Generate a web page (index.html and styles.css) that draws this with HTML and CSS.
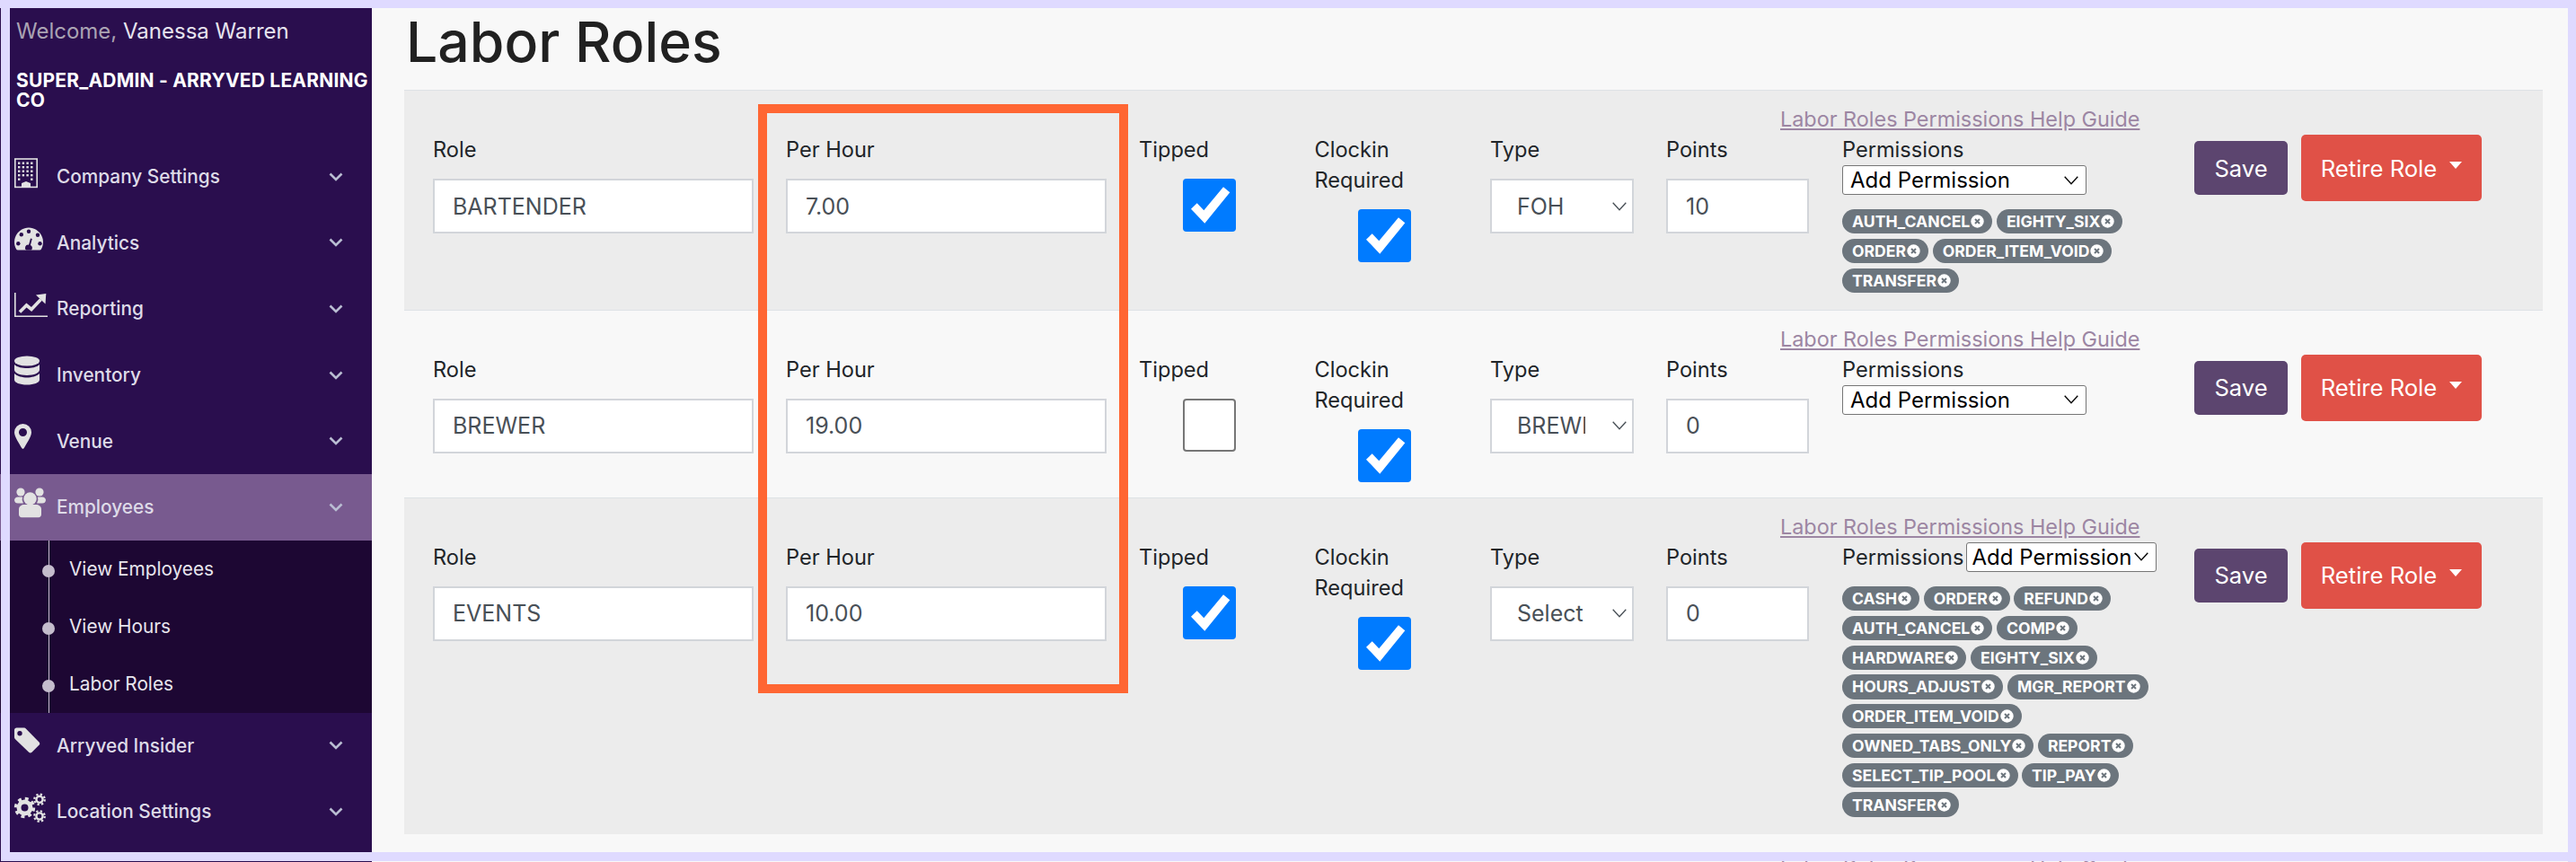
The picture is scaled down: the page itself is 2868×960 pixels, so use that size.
FILE: index.html
```html
<!DOCTYPE html>
<html lang="en">
<head>
<meta charset="utf-8">
<title>Labor Roles</title>
<link rel="stylesheet" href="styles.css">
</head>
<body>
<div class="page">
  <div class="edge"></div>
  <div class="frame">
    <div class="shell">
      <aside class="sidebar">
        <div class="welcome"><span class="welcome-muted">Welcome,</span> Vanessa Warren</div>
        <div class="company">SUPER_ADMIN - ARRYVED LEARNING CO</div>
        <nav class="nav">
          <a class="nav-item">
            <svg class="nav-icon" viewBox="0 0 40 40"><rect x="0.8" y="0" width="24.4" height="31.4" fill="none" stroke="#e2e2e2" stroke-width="1.6"/><g fill="#e2e2e2"><rect x="4" y="3.5" width="2.4" height="2.4"/><rect x="8.7" y="3.5" width="2.4" height="2.4"/><rect x="13.4" y="3.5" width="2.4" height="2.4"/><rect x="18.1" y="3.5" width="2.4" height="2.4"/><rect x="4" y="8" width="2.4" height="2.4"/><rect x="8.7" y="8" width="2.4" height="2.4"/><rect x="13.4" y="8" width="2.4" height="2.4"/><rect x="18.1" y="8" width="2.4" height="2.4"/><rect x="4" y="12.5" width="2.4" height="2.4"/><rect x="8.7" y="12.5" width="2.4" height="2.4"/><rect x="13.4" y="12.5" width="2.4" height="2.4"/><rect x="18.1" y="12.5" width="2.4" height="2.4"/><rect x="4" y="17" width="2.4" height="2.4"/><rect x="8.7" y="17" width="2.4" height="2.4"/><rect x="13.4" y="17" width="2.4" height="2.4"/><rect x="18.1" y="17" width="2.4" height="2.4"/><rect x="4" y="21.5" width="2.4" height="2.4"/><rect x="18.1" y="21.5" width="2.4" height="2.4"/><path d="M8 31v-4l5-2 5 2v4z"/></g></svg>
            <span class="nav-label">Company Settings</span>
            <svg class="chev" viewBox="0 0 16 10"><path d="M1.5 1.5 8 8l6.5-6.5" fill="none" stroke="#b9bdd2" stroke-width="2.6"/></svg>
          </a>
          <a class="nav-item">
            <svg class="nav-icon" viewBox="0 0 40 40"><path d="M16 3.6C7.2 3.6 0 10.8 0 19.6c0 3 .8 5.6 2.1 8a2 2 0 0 0 1.7 1h24.4a2 2 0 0 0 1.7-1c1.3-2.4 2.1-5 2.1-8C32 10.8 24.8 3.6 16 3.6z" fill="#e2e2e2"/><g fill="#2a0e4e"><circle cx="4.3" cy="21.3" r="2.2"/><circle cx="7.8" cy="11.3" r="2.2"/><circle cx="16" cy="7.8" r="2.2"/><circle cx="26" cy="11.8" r="2.2"/><circle cx="28.5" cy="21.3" r="2.2"/><path d="M18 15.500l1.800.5-1.900 7a3.300 3.300 0 0 1 .9 5.500h-5.600a3.300 3.300 0 0 1 2.800-5.800z"/></g></svg>
            <span class="nav-label">Analytics</span>
            <svg class="chev" viewBox="0 0 16 10"><path d="M1.5 1.5 8 8l6.5-6.5" fill="none" stroke="#b9bdd2" stroke-width="2.6"/></svg>
          </a>
          <a class="nav-item">
            <svg class="nav-icon" viewBox="0 0 40 40"><path d="M.8 2v26.200H37" fill="none" stroke="#e2e2e2" stroke-width="1.6"/><path d="M6 23.500l7.500-7.500 5.500 4.500 10.500-11" fill="none" stroke="#e2e2e2" stroke-width="3.6"/><path d="M24 4.500 35.300 3l-.8 11.500z" fill="#e2e2e2"/></svg>
            <span class="nav-label">Reporting</span>
            <svg class="chev" viewBox="0 0 16 10"><path d="M1.5 1.5 8 8l6.5-6.5" fill="none" stroke="#b9bdd2" stroke-width="2.6"/></svg>
          </a>
          <a class="nav-item">
            <svg class="nav-icon" viewBox="0 0 40 40"><g fill="#e2e2e2"><ellipse cx="14" cy="4" rx="14" ry="5.6"/><path d="M0 8c3 3 9 4 14 4s11-1 14-4v6c0 3-6 6-14 6S0 17 0 14z"/><path d="M0 18c3 3 9 4.500 14 4.500S25 21 28 18v7c0 3-6 5.500-14 5.500S0 28 0 25z"/></g></svg>
            <span class="nav-label">Inventory</span>
            <svg class="chev" viewBox="0 0 16 10"><path d="M1.5 1.5 8 8l6.5-6.5" fill="none" stroke="#b9bdd2" stroke-width="2.6"/></svg>
          </a>
          <a class="nav-item">
            <svg class="nav-icon" viewBox="0 0 40 40"><path fill-rule="evenodd" d="M9.500 1A9.500 9.500 0 0 1 19 10.500c0 5-5.900 13-8.200 17.600-.6 1.100-2 1.100-2.600 0C5.900 23.500 0 15.500 0 10.500A9.500 9.500 0 0 1 9.500 1zm0 5a4.500 4.500 0 1 0 0 9 4.500 4.500 0 0 0 0-9z" fill="#e2e2e2"/></svg>
            <span class="nav-label">Venue</span>
            <svg class="chev" viewBox="0 0 16 10"><path d="M1.5 1.5 8 8l6.5-6.5" fill="none" stroke="#b9bdd2" stroke-width="2.6"/></svg>
          </a>
          <a class="nav-item nav-item-active">
            <svg class="nav-icon" viewBox="0 0 40 40"><g fill="#e2e2e2"><circle cx="7" cy="3" r="4.6"/><circle cx="28" cy="3" r="4.6"/><path d="M0 12a4 4 0 0 1 4-3.500h5a8 8 0 0 0 1 7H4a4 4 0 0 1-4-3.500z"/><path d="M35 12a4 4 0 0 0-4-3.500h-5a8 8 0 0 1-1 7h6a4 4 0 0 0 4-3.500z"/><circle cx="17.5" cy="10.5" r="7.2"/><path d="M5 22c0-3 3-5 6-5h13c3 0 6 2 6 5v6c0 2-1.500 3.200-3 3.200H8c-1.500 0-3-1.200-3-3.200z"/></g></svg>
            <span class="nav-label">Employees</span>
            <svg class="chev" viewBox="0 0 16 10"><path d="M1.5 1.5 8 8l6.5-6.5" fill="none" stroke="#b9bdd2" stroke-width="2.6"/></svg>
          </a>
          <div class="subnav">
            <a class="sub-item">View Employees</a>
            <a class="sub-item">View Hours</a>
            <a class="sub-item">Labor Roles</a>
          </div>
          <a class="nav-item">
            <svg class="nav-icon" viewBox="0 0 40 40"><path fill-rule="evenodd" d="M2.500.6H11c.7 0 1.300.3 1.800.8l14.700 15c1 1 1 2.500 0 3.400l-8 8c-1 1-2.500 1-3.400 0L1 13.200c-.6-.6-1-1.300-1-2V3C0 1.700 1.200.6 2.500.6zM6 4a2.700 2.700 0 1 0 0 5.400A2.700 2.700 0 0 0 6 4z" fill="#e2e2e2"/></svg>
            <span class="nav-label">Arryved Insider</span>
            <svg class="chev" viewBox="0 0 16 10"><path d="M1.5 1.5 8 8l6.5-6.5" fill="none" stroke="#b9bdd2" stroke-width="2.6"/></svg>
          </a>
          <a class="nav-item">
            <svg class="nav-icon" viewBox="0 0 40 40"><g fill="none" stroke="#e2e2e2"><circle cx="11.5" cy="15.5" r="6.5" stroke-width="5"/><circle cx="11.5" cy="15.5" r="10" stroke-width="3.4" stroke-dasharray="3.9 3.95"/><circle cx="28" cy="6.3" r="3.6" stroke-width="2.4"/><circle cx="28" cy="6.3" r="5.8" stroke-width="2.2" stroke-dasharray="2.28 2.28"/><circle cx="28" cy="25" r="3.6" stroke-width="2.4"/><circle cx="28" cy="25" r="5.8" stroke-width="2.2" stroke-dasharray="2.28 2.28"/></g></svg>
            <span class="nav-label">Location Settings</span>
            <svg class="chev" viewBox="0 0 16 10"><path d="M1.5 1.5 8 8l6.5-6.5" fill="none" stroke="#b9bdd2" stroke-width="2.6"/></svg>
          </a>
        </nav>
      </aside>
      <main class="main">
        <h1 class="title">Labor Roles</h1>

        <section class="role role-shaded">
          <div class="help"><a class="help-link">Labor Roles Permissions Help Guide</a></div>
          <div class="role-grid">
            <div class="field"><label class="label">Role</label><input class="control control-wide" value="BARTENDER"></div>
            <div class="field"><label class="label">Per Hour</label><input class="control control-wide" value="7.00"></div>
            <div class="field"><label class="label">Tipped</label><input class="check" type="checkbox" checked></div>
            <div class="field"><label class="label label-clockin">Clockin Required</label><input class="check" type="checkbox" checked></div>
            <div class="field"><label class="label">Type</label><select class="control control-select"><option>FOH</option></select></div>
            <div class="field"><label class="label">Points</label><input class="control control-small" value="10"></div>
            <div class="perm">
              <div class="perm-head"><label class="label-bare">Permissions</label><select class="perm-select"><option>Add Permission</option></select></div>
              <div class="chips">
                <span class="chip">AUTH_CANCEL<i class="chip-x"></i></span><span class="chip">EIGHTY_SIX<i class="chip-x"></i></span><span class="chip">ORDER<i class="chip-x"></i></span><span class="chip">ORDER_ITEM_VOID<i class="chip-x"></i></span><span class="chip">TRANSFER<i class="chip-x"></i></span>
              </div>
            </div>
            <div class="actions"><button class="btn btn-save">Save</button><button class="btn btn-retire">Retire Role<i class="caret"></i></button></div>
          </div>
        </section>

        <section class="role">
          <div class="help"><a class="help-link">Labor Roles Permissions Help Guide</a></div>
          <div class="role-grid">
            <div class="field"><label class="label">Role</label><input class="control control-wide" value="BREWER"></div>
            <div class="field"><label class="label">Per Hour</label><input class="control control-wide" value="19.00"></div>
            <div class="field"><label class="label">Tipped</label><input class="check" type="checkbox"></div>
            <div class="field"><label class="label label-clockin">Clockin Required</label><input class="check" type="checkbox" checked></div>
            <div class="field"><label class="label">Type</label><select class="control control-select"><option>BREWERY</option></select></div>
            <div class="field"><label class="label">Points</label><input class="control control-small" value="0"></div>
            <div class="perm">
              <div class="perm-head"><label class="label-bare">Permissions</label><select class="perm-select"><option>Add Permission</option></select></div>
            </div>
            <div class="actions"><button class="btn btn-save">Save</button><button class="btn btn-retire">Retire Role<i class="caret"></i></button></div>
          </div>
        </section>

        <section class="role role-shaded">
          <div class="help"><a class="help-link">Labor Roles Permissions Help Guide</a></div>
          <div class="role-grid">
            <div class="field"><label class="label">Role</label><input class="control control-wide" value="EVENTS"></div>
            <div class="field"><label class="label">Per Hour</label><input class="control control-wide" value="10.00"></div>
            <div class="field"><label class="label">Tipped</label><input class="check" type="checkbox" checked></div>
            <div class="field"><label class="label label-clockin">Clockin Required</label><input class="check" type="checkbox" checked></div>
            <div class="field"><label class="label">Type</label><select class="control control-select"><option>Select</option></select></div>
            <div class="field"><label class="label">Points</label><input class="control control-small" value="0"></div>
            <div class="perm">
              <div class="perm-head perm-head-inline"><label class="label-bare">Permissions</label><select class="perm-select perm-select-narrow"><option>Add Permission</option></select></div>
              <div class="chips chips-long">
                <span class="chip">CASH<i class="chip-x"></i></span><span class="chip">ORDER<i class="chip-x"></i></span><span class="chip">REFUND<i class="chip-x"></i></span><span class="chip">AUTH_CANCEL<i class="chip-x"></i></span><span class="chip">COMP<i class="chip-x"></i></span><span class="chip">HARDWARE<i class="chip-x"></i></span><span class="chip">EIGHTY_SIX<i class="chip-x"></i></span><span class="chip">HOURS_ADJUST<i class="chip-x"></i></span><span class="chip">MGR_REPORT<i class="chip-x"></i></span><span class="chip">ORDER_ITEM_VOID<i class="chip-x"></i></span><span class="chip">OWNED_TABS_ONLY<i class="chip-x"></i></span><span class="chip">REPORT<i class="chip-x"></i></span><span class="chip">SELECT_TIP_POOL<i class="chip-x"></i></span><span class="chip">TIP_PAY<i class="chip-x"></i></span><span class="chip">TRANSFER<i class="chip-x"></i></span>
              </div>
            </div>
            <div class="actions"><button class="btn btn-save">Save</button><button class="btn btn-retire">Retire Role<i class="caret"></i></button></div>
          </div>
        </section>

        <div class="callout"></div>
      </main>
    </div>
    <div class="tail">
      <div class="tail-side"></div>
      <div class="tail-main"><a class="help-link tail-link">Labor Roles Permissions Help Guide</a></div>
    </div>
  </div>
</div>
</body>
</html>
```

FILE: styles.css
```css
* { box-sizing: border-box; }

html, body { margin: 0; padding: 0; }

body {
  background: #dfdaff;
  font-family: Inter, "Liberation Sans", sans-serif;
  color: #212529;
}

.page {
  display: flex;
  width: 2868px;
  height: 960px;
  overflow: hidden;
  background: #dfdaff;
}

.edge {
  flex: 0 0 1px;
  background: linear-gradient(to bottom,
    #dfdaff 0, #dfdaff 9px,
    #2a0e4e 9px, #2a0e4e 528px,
    #785a8f 528px, #785a8f 602px,
    #1d0733 602px, #1d0733 794px,
    #2a0e4e 794px, #2a0e4e 960px);
}

.frame {
  flex: 1;
  display: flex;
  flex-direction: column;
  min-width: 0;
}

.shell {
  display: flex;
  height: 940px;
  margin: 9px 9px 10px 10px;
}

/* Sidebar */
.sidebar {
  flex: 0 0 403px;
  background: #2a0e4e;
  color: #e6e3ee;
  overflow: hidden;
}

.welcome {
  padding: 12px 7px 0;
  font-size: 24px;
  line-height: 28px;
}

.welcome-muted { color: #aaa3b3; }

.company {
  margin-top: 30px;
  padding: 0 0 0 7px;
  font-size: 21px;
  line-height: 22px;
  font-weight: 700;
  letter-spacing: 0.2px;
  color: #fff;
}

.nav {
  display: flex;
  flex-direction: column;
  margin-top: 37px;
}

.nav-item {
  display: flex;
  align-items: center;
  height: 73.6px;
  padding: 0 32px 0 5px;
  color: #dedbe8;
}

.nav-item-active { background: #785a8f; }

.nav-icon {
  flex: 0 0 40px;
  width: 40px;
  height: 40px;
  margin-right: 7px;
  overflow: visible;
}

.nav-label {
  flex: 1;
  font-size: 20.8px;
  font-weight: 500;
}

.chev {
  flex: 0 0 16px;
  width: 16px;
  height: 10px;
}

.subnav {
  position: relative;
  display: flex;
  flex-direction: column;
  background: #1d0733;
}

.subnav::before {
  content: "";
  position: absolute;
  left: 43px;
  top: 0;
  bottom: 0;
  width: 1px;
  background: #c8c1d0;
}

.sub-item {
  position: relative;
  display: flex;
  align-items: center;
  height: 64px;
  padding-left: 66px;
  font-size: 20.8px;
  color: #e8e5ee;
}

.sub-item::before {
  content: "";
  position: absolute;
  left: 36px;
  top: 27px;
  width: 14px;
  height: 14px;
  border-radius: 50%;
  background: #c4bccc;
}

/* Main */
.main {
  position: relative;
  flex: 1;
  min-width: 0;
  padding: 0 28px 0 36px;
  background: #f8f8f8;
  overflow: hidden;
}

.title {
  margin: 0;
  height: 91px;
  padding-left: 2px;
  font-size: 62.5px;
  line-height: 74px;
  font-weight: 500;
  color: #212121;
}

.role {
  padding: 15px 0 17px;
  border-top: 1px solid #dee2e6;
}

.role-shaded { background: #ececec; }

.help {
  height: 34px;
  padding-left: 1532px;
  line-height: 34px;
}

.help-link {
  font-size: 23.4px;
  line-height: 34px;
  color: #9c86a3;
  text-decoration: underline;
  white-space: nowrap;
}

.role-grid {
  display: grid;
  grid-template-columns: 393px 393px 195.5px 195.5px 196px 196px 392px 1fr;
  padding-left: 32px;
  align-items: start;
}

.label, .label-bare {
  display: block;
  font-size: 23.6px;
  line-height: 34px;
  color: #212529;
}

.label { margin-bottom: 15px; }

.label-clockin { width: 150px; }

.control {
  display: block;
  height: 61px;
  border: 2px solid #d2d5da;
  border-radius: 0;
  background-color: #fff;
  font-family: inherit;
  font-size: 25px;
  color: #495057;
  padding: 0 20px;
  outline: none;
}

.control-wide { width: 357px; }
.control-small { width: 159px; }

.control-select {
  width: 160px;
  padding: 0 52px 0 28px;
  appearance: none;
  -webkit-appearance: none;
  background-image: url("data:image/svg+xml,%3Csvg xmlns='http://www.w3.org/2000/svg' width='16' height='10'%3E%3Cpath d='M.7.7 8 8.8 15.3.7' fill='none' stroke='%23495057' stroke-width='1.3'/%3E%3C/svg%3E");
  background-repeat: no-repeat;
  background-position: right 6px center;
}

.check {
  display: block;
  width: 59px;
  height: 59px;
  margin: 0 0 0 48.5px;
  appearance: none;
  -webkit-appearance: none;
  background: #fff;
  border: 2px solid #767676;
  border-radius: 4px;
}

.check:checked {
  border: 0;
  background: #007bff url("data:image/svg+xml,%3Csvg xmlns='http://www.w3.org/2000/svg' viewBox='0 0 59 59'%3E%3Cpath d='M9 33.7 24.3 49.7 52.3 15.3 45 9.3 23.3 35.3 15.7 27.3z' fill='%23fff'/%3E%3C/svg%3E") center / 59px 59px no-repeat;
}

.perm { min-width: 0; }

.perm-head {
  display: flex;
  flex-direction: column;
  align-items: flex-start;
}

.perm-head-inline {
  flex-direction: row;
  align-items: flex-start;
  gap: 2px;
}

.perm-select {
  width: 272px;
  height: 33px;
  padding: 0 30px 0 8px;
  font-family: inherit;
  font-size: 24px;
  line-height: 29px;
  color: #000;
  background-color: #fff;
  border: 1px solid #767676;
  border-radius: 3px;
  appearance: none;
  -webkit-appearance: none;
  background-image: url("data:image/svg+xml,%3Csvg xmlns='http://www.w3.org/2000/svg' width='16' height='10'%3E%3Cpath d='M.7.7 8 8.8 15.3.7' fill='none' stroke='%23000' stroke-width='1.3'/%3E%3C/svg%3E");
  background-repeat: no-repeat;
  background-position: right 8px center;
}

.perm-select-narrow {
  width: 212px;
  padding: 0 24px 0 6px;
}

.chips {
  display: flex;
  flex-wrap: wrap;
  gap: 5.4px 4.6px;
  width: 345px;
  margin: 16px 0 2px;
}

.chips-long { margin-top: 15px; }

.chip {
  display: inline-flex;
  align-items: center;
  height: 27.4px;
  padding: 0 9px 0 11px;
  border-radius: 14px;
  background: #6c757d;
  color: #fff;
  font-size: 17.6px;
  font-weight: 700;
  white-space: nowrap;
}

.chip-x {
  display: block;
  width: 15px;
  height: 15px;
  margin-left: 1px;
  background: url("data:image/svg+xml,%3Csvg xmlns='http://www.w3.org/2000/svg' viewBox='0 0 15 15'%3E%3Ccircle cx='7.5' cy='7.5' r='7.2' fill='%23fff'/%3E%3Cpath d='M5 5l5 5M10 5l-5 5' stroke='%236c757d' stroke-width='2'/%3E%3C/svg%3E") center / 15px 15px no-repeat;
}

.actions {
  display: flex;
  align-items: center;
  gap: 15px;
}

.btn {
  border: 0;
  border-radius: 5px;
  font-family: inherit;
  font-size: 25.6px;
  color: #fff;
}

.btn-save {
  width: 104px;
  height: 60px;
  background: #5c456f;
}

.btn-retire {
  display: flex;
  align-items: center;
  justify-content: center;
  width: 201px;
  height: 74px;
  background: #e05147;
}

.caret {
  display: block;
  width: 0;
  height: 0;
  margin: -6px 0 0 14px;
  border-left: 7px solid transparent;
  border-right: 7px solid transparent;
  border-top: 8px solid #fff;
}

/* Orange annotation drawn over the form */
.callout {
  position: absolute;
  left: 430px;
  top: 107px;
  width: 412px;
  height: 656px;
  border: 10px solid #ff6633;
  pointer-events: none;
}

/* One pixel of the page below the fold */
.tail {
  display: flex;
  height: 1px;
  overflow: hidden;
}

.tail-side {
  flex: 0 0 413px;
  background: #2a0e4e;
}

.tail-main {
  flex: 1;
  margin-right: 9px;
  padding-left: 1568px;
  background: #f8f8f8;
  line-height: 1px;
  overflow: hidden;
}

.tail-link {
  display: block;
  margin-top: -10px;
}
```
